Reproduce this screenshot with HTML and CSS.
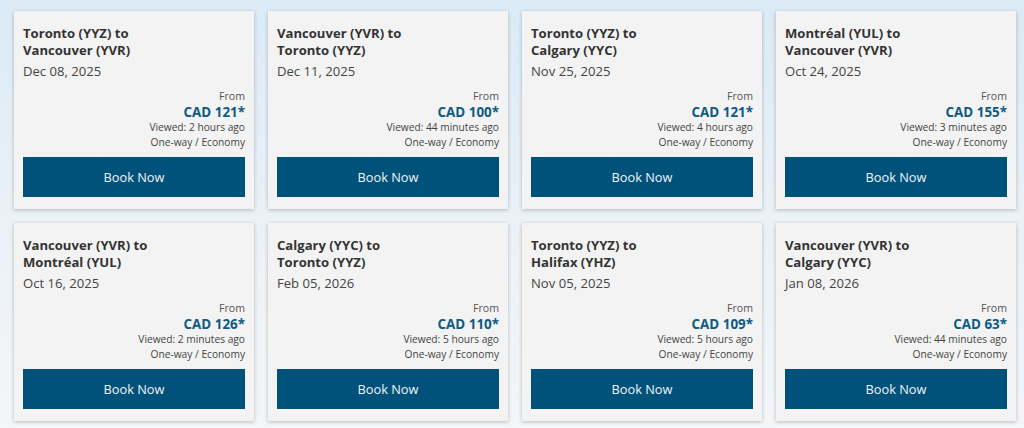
FILE: index.html
```html
<!DOCTYPE html>
<html lang="en">
<head>
<meta charset="utf-8">
<title>Recently viewed flights</title>
<link rel="stylesheet" href="styles.css">
</head>
<body>
<main class="grid">
  <article class="card">
    <h3 class="route">Toronto (YYZ) to<br>Vancouver (YVR)</h3>
    <div class="date">Dec 08, 2025</div>
    <div class="price-block">
      <div class="from">From</div>
      <div class="price">CAD 121*</div>
      <div class="meta">Viewed: 2 hours ago</div>
      <div class="meta">One-way / Economy</div>
    </div>
    <button class="book">Book Now</button>
  </article>
  <article class="card">
    <h3 class="route">Vancouver (YVR) to<br>Toronto (YYZ)</h3>
    <div class="date">Dec 11, 2025</div>
    <div class="price-block">
      <div class="from">From</div>
      <div class="price">CAD 100*</div>
      <div class="meta">Viewed: 44 minutes ago</div>
      <div class="meta">One-way / Economy</div>
    </div>
    <button class="book">Book Now</button>
  </article>
  <article class="card">
    <h3 class="route">Toronto (YYZ) to<br>Calgary (YYC)</h3>
    <div class="date">Nov 25, 2025</div>
    <div class="price-block">
      <div class="from">From</div>
      <div class="price">CAD 121*</div>
      <div class="meta">Viewed: 4 hours ago</div>
      <div class="meta">One-way / Economy</div>
    </div>
    <button class="book">Book Now</button>
  </article>
  <article class="card">
    <h3 class="route">Montréal (YUL) to<br>Vancouver (YVR)</h3>
    <div class="date">Oct 24, 2025</div>
    <div class="price-block">
      <div class="from">From</div>
      <div class="price">CAD 155*</div>
      <div class="meta">Viewed: 3 minutes ago</div>
      <div class="meta">One-way / Economy</div>
    </div>
    <button class="book">Book Now</button>
  </article>
  <article class="card">
    <h3 class="route">Vancouver (YVR) to<br>Montréal (YUL)</h3>
    <div class="date">Oct 16, 2025</div>
    <div class="price-block">
      <div class="from">From</div>
      <div class="price">CAD 126*</div>
      <div class="meta">Viewed: 2 minutes ago</div>
      <div class="meta">One-way / Economy</div>
    </div>
    <button class="book">Book Now</button>
  </article>
  <article class="card">
    <h3 class="route">Calgary (YYC) to<br>Toronto (YYZ)</h3>
    <div class="date">Feb 05, 2026</div>
    <div class="price-block">
      <div class="from">From</div>
      <div class="price">CAD 110*</div>
      <div class="meta">Viewed: 5 hours ago</div>
      <div class="meta">One-way / Economy</div>
    </div>
    <button class="book">Book Now</button>
  </article>
  <article class="card">
    <h3 class="route">Toronto (YYZ) to<br>Halifax (YHZ)</h3>
    <div class="date">Nov 05, 2025</div>
    <div class="price-block">
      <div class="from">From</div>
      <div class="price">CAD 109*</div>
      <div class="meta">Viewed: 5 hours ago</div>
      <div class="meta">One-way / Economy</div>
    </div>
    <button class="book">Book Now</button>
  </article>
  <article class="card">
    <h3 class="route">Vancouver (YVR) to<br>Calgary (YYC)</h3>
    <div class="date">Jan 08, 2026</div>
    <div class="price-block">
      <div class="from">From</div>
      <div class="price">CAD 63*</div>
      <div class="meta">Viewed: 44 minutes ago</div>
      <div class="meta">One-way / Economy</div>
    </div>
    <button class="book">Book Now</button>
  </article>
</main>
</body>
</html>
```

FILE: styles.css
```css
html, body {
  margin: 0;
  padding: 0;
}
body {
  width: 1024px;
  height: 428px;
  overflow: hidden;
  font-family: "Open Sans", "Liberation Sans", sans-serif;
  background: linear-gradient(180deg, #dbeaf6 0%, #eaf1f7 50%, #f4f6f8 100%);
  color: #333;
}
.grid {
  display: grid;
  grid-template-columns: repeat(4, 240px);
  column-gap: 14px;
  row-gap: 14px;
  padding: 11px 0 0 14px;
}
.card {
  background: #f3f3f3;
  box-shadow: 0 1px 4px rgba(0, 0, 0, 0.24);
  padding: 14px 9px 12px 9px;
  display: flex;
  flex-direction: column;
}
.route {
  margin: 0;
  font-size: 13.1px;
  font-weight: 700;
  line-height: 17px;
  color: #333;
}
.date {
  margin-top: 2px;
  font-size: 13.1px;
  line-height: 20px;
  color: #444;
}
.price-block {
  margin-top: 8px;
  text-align: right;
}
.from {
  font-size: 10.6px;
  line-height: 15px;
  color: #555;
}
.price {
  font-size: 13.4px;
  font-weight: 700;
  line-height: 16px;
  color: #0f5a82;
}
.meta {
  font-size: 10.2px;
  line-height: 15px;
  color: #444;
}
.book {
  margin-top: 7px;
  height: 40px;
  border: none;
  background: #00527a;
  color: #f1f5f8;
  font-family: "Open Sans", "Liberation Sans", sans-serif;
  font-size: 12.8px;
  cursor: pointer;
}
```
